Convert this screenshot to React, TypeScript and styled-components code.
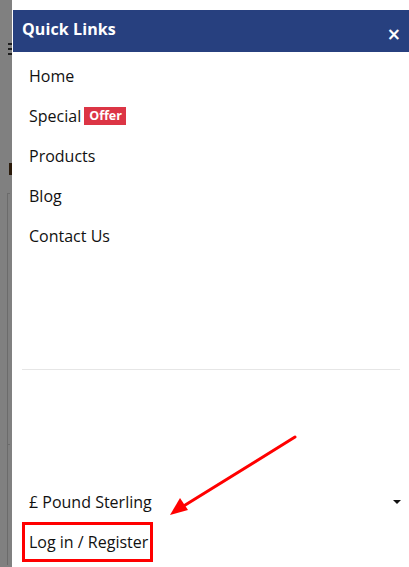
import React from "react";
import styled, { createGlobalStyle } from "styled-components";

const Global = createGlobalStyle`
  html, body { margin: 0; padding: 0; }
  body { font-family: "Open Sans", "Lato", sans-serif; background: #808080; }
`;

const Page = styled.div`
  position: relative;
  width: 409px;
  height: 567px;
  display: flex;
  overflow: hidden;
`;

const Backdrop = styled.div`
  width: 12px;
  flex: none;
  background: #808080;
  display: flex;
  flex-direction: column;
  align-items: flex-end;
`;

const Burger = styled.div`
  margin-top: 43px;
  width: 4px;
  height: 13px;
  background: repeating-linear-gradient(#1e1e1e 0 2px, transparent 2px 5px);
`;

const Digit = styled.div`
  margin-top: 107px;
  width: 3px;
  height: 12px;
  background: #2a1a0a;
`;

const Rail = styled.div<{ $h: number; $mt: number }>`
  margin-top: ${(p) => p.$mt}px;
  margin-right: 2px;
  width: 2px;
  height: ${(p) => p.$h}px;
  border-left: 1px solid #6b6b6b;
  border-top: 1px solid #6b6b6b;
`;

const Panel = styled.aside`
  flex: 1;
  background: #fff;
  display: flex;
  flex-direction: column;
  padding-bottom: 5px;
`;

const Header = styled.div`
  margin-top: 10px;
  margin-left: 1px;
  height: 42px;
  background: #27407f;
  color: #fff;
  display: flex;
  align-items: center;
  justify-content: space-between;
  padding: 0 8px 0 9px;
`;

const Title = styled.h2`
  margin: 0 0 4px;
  font-size: 16px;
  font-weight: 700;
  letter-spacing: 0.1px;
`;

const Close = styled.button`
  border: 0;
  background: none;
  color: #fff;
  font-size: 17px;
  font-weight: 700;
  line-height: 1;
  padding: 0;
  margin-top: 6px;
  font-family: "DejaVu Sans", sans-serif;
`;

const List = styled.nav`
  display: flex;
  flex-direction: column;
  padding-top: 4px;
`;

const Item = styled.a`
  height: 40px;
  display: flex;
  align-items: center;
  padding-left: 17px;
  font-size: 16px;
  color: #111;
  text-decoration: none;
`;

const Badge = styled.span`
  margin-left: 3px;
  background: #dc3545;
  color: #fff;
  font-size: 12.5px;
  font-weight: 700;
  padding: 1px 4px 1px 5px;
  line-height: 16px;
`;

const Divider = styled.hr`
  margin: 113px 9px 0 10px;
  border: 0;
  border-top: 1px solid #e6e6e6;
`;

const Spacer = styled.div`
  flex: 1;
`;

const Currency = styled.div`
  height: 40px;
  display: flex;
  align-items: center;
  justify-content: space-between;
  padding: 0 8px 0 17px;
  font-size: 16px;
  color: #111;
`;

const Caret = styled.span`
  width: 0;
  height: 0;
  border-left: 4px solid transparent;
  border-right: 4px solid transparent;
  border-top: 4px solid #111;
`;

const LoginBox = styled.a`
  margin-left: 10px;
  width: 131px;
  height: 40px;
  box-sizing: border-box;
  border: 3px solid #f00;
  display: flex;
  align-items: center;
  padding-left: 4px;
  font-size: 16px;
  color: #111;
  text-decoration: none;
  white-space: nowrap;
`;

const Arrow = styled.svg`
  position: absolute;
  left: 0;
  top: 0;
  pointer-events: none;
`;

export default function App() {
  const links = ["Home", "Special", "Products", "Blog", "Contact Us"];
  return (
    <>
      <Global />
      <Page>
        <Backdrop>
          <Burger />
          <Digit />
          <Rail $mt={18} $h={250} />
          <Rail $mt={0} $h={120} />
        </Backdrop>
        <Panel>
          <Header>
            <Title>Quick Links</Title>
            <Close aria-label="Close">×</Close>
          </Header>
          <List>
            {links.map((l) => (
              <Item key={l} href="#">
                {l}
                {l === "Special" && <Badge>Offer</Badge>}
              </Item>
            ))}
          </List>
          <Divider />
          <Spacer />
          <Currency>
            <span>£ Pound Sterling</span>
            <Caret />
          </Currency>
          <LoginBox href="#">Log in / Register</LoginBox>
        </Panel>
        <Arrow width="409" height="567" viewBox="0 0 409 567">
          <line x1="295" y1="437" x2="182" y2="507" stroke="#f00" strokeWidth="3" strokeLinecap="round" />
          <polygon points="170,515 180,498 188,510" fill="#f00" />
        </Arrow>
      </Page>
    </>
  );
}
